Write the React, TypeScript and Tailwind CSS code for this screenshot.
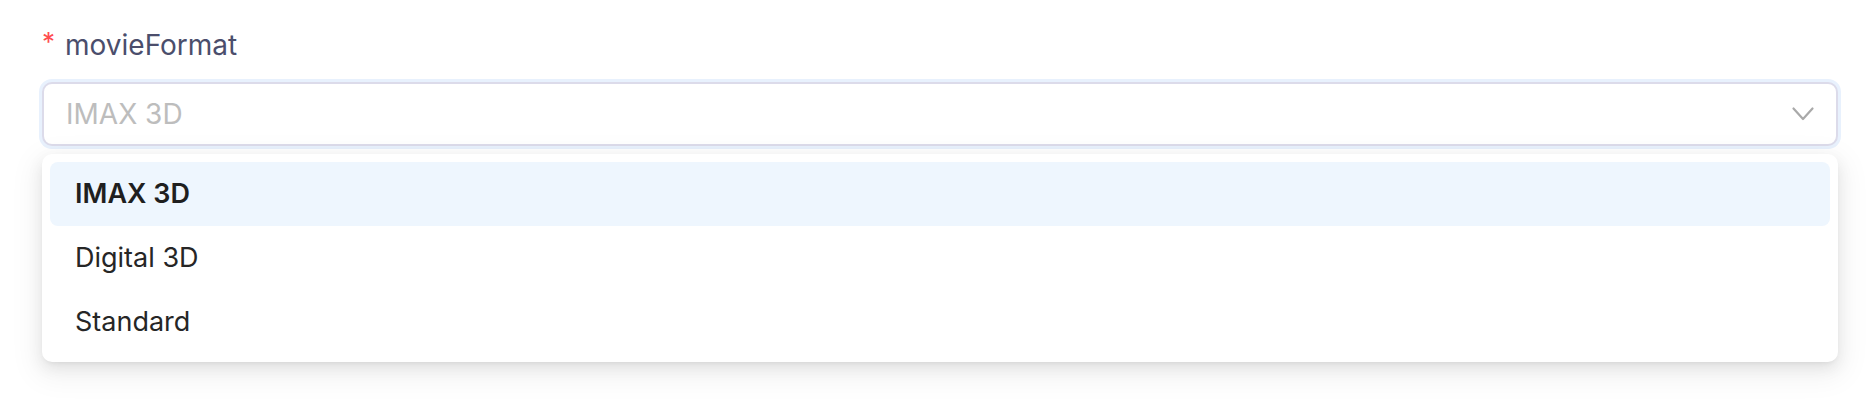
import { useState } from 'react';

const options = ['IMAX 3D', 'Digital 3D', 'Standard'];

function Chevron() {
  return (
    <svg width="22" height="14" viewBox="0 0 22 14" fill="none" className="text-[#a9a9a9]">
      <path d="M1.5 1.5 L11 12 L20.5 1.5" stroke="currentColor" strokeWidth="2.2" strokeLinecap="round" strokeLinejoin="round" />
    </svg>
  );
}

export default function App() {
  const [active] = useState('IMAX 3D');

  return (
    <div className="h-[408px] w-full overflow-hidden bg-white pl-[42px] pr-[38px] pt-[25px] font-['Inter',sans-serif]">
      <label className="flex h-[40px] items-center text-[28px] leading-[40px] text-[#4b4e6c]">
        <span className="mr-[10px] -translate-y-[3px] text-[26px] text-[#ff4d4f]">*</span>
        movieFormat
      </label>

      <div className="relative mt-[17px]">
        <div className="flex h-[64px] items-center justify-between rounded-[10px] border-2 border-[#dcdbea] bg-white pl-[22px] pr-[22px] shadow-[0_0_0_3px_#e8f1fd]">
          <span className="text-[28px] text-[#bdbdbd]">IMAX 3D</span>
          <Chevron />
        </div>

        <div className="relative z-10 mt-[8px] rounded-[10px] bg-white p-[8px] shadow-[0_6px_16px_0_rgba(0,0,0,0.08),0_3px_6px_-4px_rgba(0,0,0,0.12),0_9px_28px_8px_rgba(0,0,0,0.05)]">
          {options.map((o) => (
            <div
              key={o}
              className={
                o === active
                  ? 'flex h-[64px] items-center rounded-[8px] bg-[#eef6fe] pl-[25px] text-[27px] font-semibold text-[#1f1f1f]'
                  : 'flex h-[64px] items-center rounded-[8px] pl-[25px] text-[27px] text-[#262626]'
              }
            >
              {o}
            </div>
          ))}
        </div>
      </div>
    </div>
  );
}
